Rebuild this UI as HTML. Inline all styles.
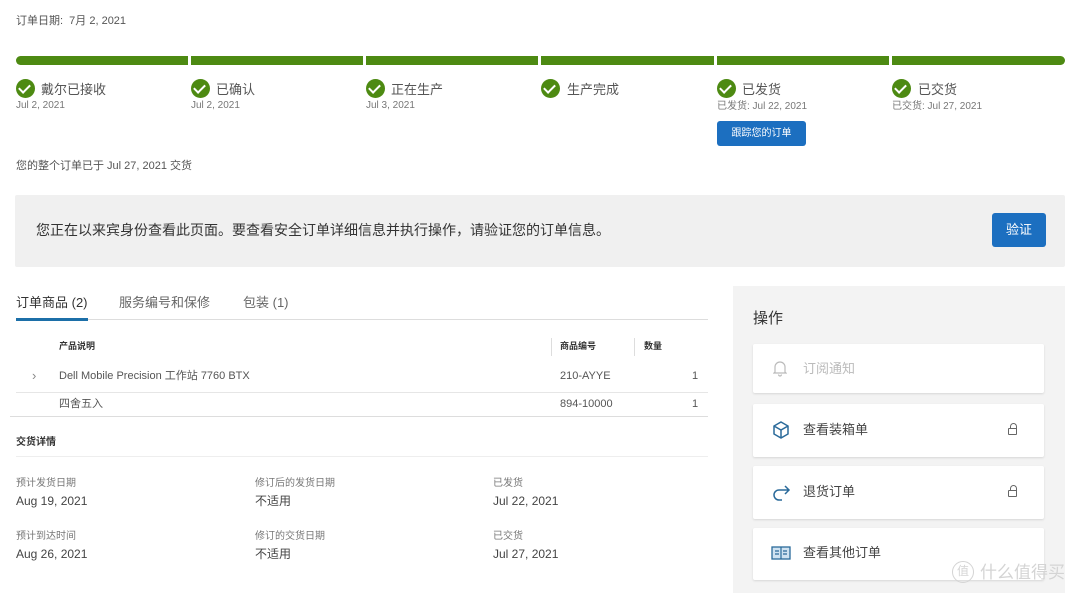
<!DOCTYPE html>
<html><head><meta charset="utf-8"><style>
*{margin:0;padding:0;box-sizing:border-box}
body{width:1080px;height:593px;background:#fff;font-family:"Liberation Sans","Noto Sans CJK SC",sans-serif;color:#444;position:relative;overflow:hidden}
.a{position:absolute;white-space:nowrap;line-height:1}
.bar{position:absolute;top:56px;height:9px;background:#4d8a12}
.chk{position:absolute;width:19px;height:19px;border-radius:50%;background:#4d8a12}
.chk:after{content:"";position:absolute;left:5px;top:3px;width:5px;height:9px;border:solid #fff;border-width:0 2.5px 2.5px 0;transform:rotate(45deg)}
.st{font-size:13px;color:#555}
.dt{font-size:10px;color:#777}
.card{position:absolute;left:753px;width:291px;background:#fff;box-shadow:0 1px 2px rgba(0,0,0,.12);border-radius:2px}
.card span{position:absolute;left:50px;font-size:13px;color:#444;line-height:1}
.lock{position:absolute;left:255px;width:9px;height:7px;border:1.5px solid #666;border-radius:1px}
.lock:before{content:"";position:absolute;left:0.5px;top:-6px;width:5px;height:5px;border:1.5px solid #666;border-bottom:none;border-radius:4px 4px 0 0}
</style></head><body>
<div class="a" style="left:16px;top:16px;font-size:11px;color:#555">订单日期:&nbsp; 7月 2, 2021</div>
<div class="bar" style="left:16px;width:172px;border-radius:5px 0 0 5px"></div>
<div class="bar" style="left:191px;width:172px"></div>
<div class="bar" style="left:366px;width:172px"></div>
<div class="bar" style="left:541px;width:173px"></div>
<div class="bar" style="left:717px;width:172px"></div>
<div class="bar" style="left:892px;width:173px;border-radius:0 5px 5px 0"></div>

<div class="chk" style="left:16px;top:79px"></div><div class="a st" style="left:41px;top:83px">戴尔已接收</div><div class="a dt" style="left:16px;top:101px">Jul 2, 2021</div>
<div class="chk" style="left:191px;top:79px"></div><div class="a st" style="left:216px;top:83px">已确认</div><div class="a dt" style="left:191px;top:101px">Jul 2, 2021</div>
<div class="chk" style="left:366px;top:79px"></div><div class="a st" style="left:391px;top:83px">正在生产</div><div class="a dt" style="left:366px;top:101px">Jul 3, 2021</div>
<div class="chk" style="left:541px;top:79px"></div><div class="a st" style="left:567px;top:83px">生产完成</div>
<div class="chk" style="left:717px;top:79px"></div><div class="a st" style="left:742px;top:83px">已发货</div><div class="a dt" style="left:717px;top:102px">已发货: Jul 22, 2021</div>
<div class="chk" style="left:892px;top:79px"></div><div class="a st" style="left:918px;top:83px">已交货</div><div class="a dt" style="left:892px;top:102px">已交货: Jul 27, 2021</div>
<div class="a" style="left:717px;top:121px;width:89px;height:25px;background:#1c6fc0;border-radius:3px;color:#fff;font-size:10px;text-align:center;line-height:25px">跟踪您的订单</div>
<div class="a" style="left:16px;top:161px;font-size:11px;color:#555">您的整个订单已于 Jul 27, 2021 交货</div>

<div class="a" style="left:15px;top:195px;width:1050px;height:72px;background:#f0f0f0;border-radius:2px"></div>
<div class="a" style="left:36px;top:223px;font-size:14px;color:#333">您正在以来宾身份查看此页面。要查看安全订单详细信息并执行操作，请验证您的订单信息。</div>
<div class="a" style="left:992px;top:213px;width:54px;height:34px;background:#1c6fc0;border-radius:3px;color:#fff;font-size:13px;text-align:center;line-height:34px">验证</div>

<div class="a" style="left:16px;top:296px;font-size:13px;color:#333">订单商品 (2)</div>
<div class="a" style="left:119px;top:296px;font-size:13px;color:#666">服务编号和保修</div>
<div class="a" style="left:243px;top:296px;font-size:13px;color:#666">包装 (1)</div>
<div class="a" style="left:16px;top:319px;width:692px;height:1px;background:#ddd"></div>
<div class="a" style="left:16px;top:318px;width:72px;height:3px;background:#1c6fa8"></div>
<div class="a" style="left:59px;top:342px;font-size:9px;color:#333;font-weight:bold">产品说明</div>
<div class="a" style="left:551px;top:338px;width:1px;height:18px;background:#ddd"></div>
<div class="a" style="left:560px;top:342px;font-size:9px;color:#333;font-weight:bold">商品编号</div>
<div class="a" style="left:634px;top:338px;width:1px;height:18px;background:#ddd"></div>
<div class="a" style="left:644px;top:342px;font-size:9px;color:#333;font-weight:bold">数量</div>
<div class="a" style="left:32px;top:369px;font-size:13px;color:#888">›</div>
<div class="a" style="left:59px;top:371px;font-size:11px;color:#555">Dell Mobile Precision 工作站 7760 BTX</div>
<div class="a" style="left:560px;top:371px;font-size:11px;color:#555">210-AYYE</div>
<div class="a" style="left:692px;top:371px;font-size:11px;color:#555">1</div>
<div class="a" style="left:16px;top:392px;width:692px;height:1px;background:#e6e6e6"></div>
<div class="a" style="left:59px;top:399px;font-size:11px;color:#555">四舍五入</div>
<div class="a" style="left:560px;top:399px;font-size:11px;color:#555">894-10000</div>
<div class="a" style="left:692px;top:399px;font-size:11px;color:#555">1</div>
<div class="a" style="left:10px;top:416px;width:698px;height:1px;background:#ddd"></div>
<div class="a" style="left:16px;top:438px;font-size:10px;color:#333;font-weight:bold">交货详情</div>
<div class="a" style="left:16px;top:456px;width:692px;height:1px;background:#eee"></div>
<div class="a dt" style="left:16px;top:479px">预计发货日期</div><div class="a" style="left:16px;top:495px;font-size:12px;color:#444">Aug 19, 2021</div>
<div class="a dt" style="left:255px;top:479px">修订后的发货日期</div><div class="a" style="left:255px;top:495px;font-size:12px;color:#444">不适用</div>
<div class="a dt" style="left:493px;top:479px">已发货</div><div class="a" style="left:493px;top:495px;font-size:12px;color:#444">Jul 22, 2021</div>
<div class="a dt" style="left:16px;top:532px">预计到达时间</div><div class="a" style="left:16px;top:548px;font-size:12px;color:#444">Aug 26, 2021</div>
<div class="a dt" style="left:255px;top:532px">修订的交货日期</div><div class="a" style="left:255px;top:548px;font-size:12px;color:#444">不适用</div>
<div class="a dt" style="left:493px;top:532px">已交货</div><div class="a" style="left:493px;top:548px;font-size:12px;color:#444">Jul 27, 2021</div>

<div class="a" style="left:733px;top:286px;width:332px;height:307px;background:#f3f3f3"></div>
<div class="a" style="left:753px;top:311px;font-size:15px;color:#333">操作</div>
<div class="card" style="top:344px;height:49px"><svg class="a" style="left:20px;top:16px" width="14" height="17" viewBox="0 0 14 17"><path d="M2 12V7a5 5 0 0 1 10 0v5l1 1H1z M5.5 14.5a1.5 1.5 0 0 0 3 0" fill="none" stroke="#bbb" stroke-width="1.2"/></svg><span style="top:18px;color:#bbb">订阅通知</span></div>
<div class="card" style="top:404px;height:53px"><svg class="a" style="left:18px;top:16px" width="20" height="20" viewBox="0 0 20 20"><path d="M10 2l7 4v8l-7 4-7-4V6z M3 6l7 4 7-4 M10 10v8" fill="none" stroke="#2a6a9a" stroke-width="1.5"/></svg><span style="top:19px">查看装箱单</span><div class="lock" style="top:24px"></div></div>
<div class="card" style="top:466px;height:53px"><svg class="a" style="left:18px;top:17px" width="20" height="20" viewBox="0 0 20 20"><path d="M14 3l4 4-4 4 M18 7H8a5 5 0 0 0 0 10h3" fill="none" stroke="#2a6a9a" stroke-width="1.5"/></svg><span style="top:19px">退货订单</span><div class="lock" style="top:24px"></div></div>
<div class="card" style="top:528px;height:52px"><svg class="a" style="left:18px;top:17px" width="20" height="16" viewBox="0 0 20 16"><rect x="1" y="2" width="18" height="12" fill="#cfe2f1" stroke="#2a6a9a" stroke-width="1.3"/><path d="M10 2v12 M4 6h4 M4 9h4 M12 6h4 M12 9h4" stroke="#2a6a9a" stroke-width="1.2"/></svg><span style="top:18px">查看其他订单</span></div>
<div class="a" style="left:952px;top:561px;width:22px;height:22px;border:1.5px solid #d4d4d4;border-radius:50%;color:#d4d4d4;font-size:12px;text-align:center;line-height:19px">值</div>
<div class="a" style="left:980px;top:564px;font-size:17px;color:#d4d4d4">什么值得买</div>
</body></html>
